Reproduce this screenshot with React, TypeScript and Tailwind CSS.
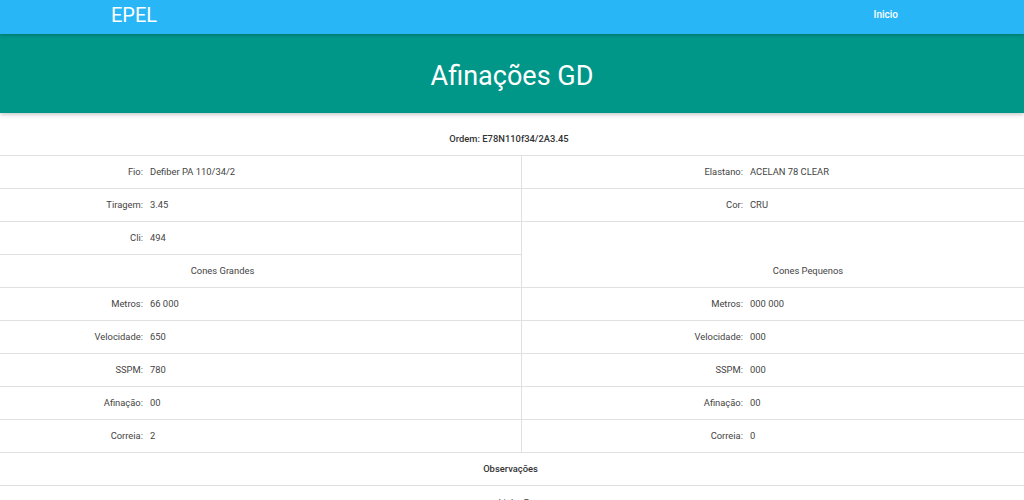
import React from "react";

const font = { fontFamily: "Roboto, 'Noto Sans', sans-serif" };

function Pair({ label, value, labelW }: { label: string; value: string; labelW: string }) {
  return (
    <div className="flex h-[32px] items-center text-[9.4px] text-[#444]">
      <div className={`${labelW} shrink-0 text-right`}>{label}:</div>
      <div className="pl-[7px]">{value}</div>
    </div>
  );
}

function Row({ l, r }: { l: [string, string]; r: [string, string] }) {
  return (
    <div className="flex border-b border-[#e0e0e0]">
      <div className="w-[521px] shrink-0">
        <Pair label={l[0]} value={l[1]} labelW="w-[143px]" />
      </div>
      <div className="flex-1 border-l border-[#e0e0e0]">
        <Pair label={r[0]} value={r[1]} labelW="w-[221px]" />
      </div>
    </div>
  );
}

export default function App() {
  return (
    <div className="w-[1024px] h-[500px] overflow-hidden bg-white" style={font}>
      <nav className="relative z-20 flex h-[34px] items-center bg-[#29b6f6] shadow-[0_1px_3px_rgba(0,0,0,0.25)]">
        <div className="pl-[111px] text-[20px] font-normal leading-none text-white pb-[4px]">EPEL</div>
        <div className="ml-auto mr-[126px] pb-[6px] text-[10px] font-medium text-white">Inicio</div>
      </nav>
      <header className="relative z-10 flex h-[79px] items-center justify-center bg-[#009688] pt-[5px] shadow-[0_2px_4px_rgba(0,0,0,0.2)]">
        <h1 className="text-[27px] font-normal text-white">Afinações GD</h1>
      </header>
      <div className="flex h-[43px] items-center justify-center border-b border-[#e0e0e0] pt-[11px] pr-[6px] text-[9.4px] font-medium text-[#333]">
        Ordem: E78N110f34/2A3.45
      </div>
      <Row l={["Fio", "Defiber PA 110/34/2"]} r={["Elastano", "ACELAN 78 CLEAR"]} />
      <Row l={["Tiragem", "3.45"]} r={["Cor", "CRU"]} />
      <div className="flex border-b border-[#e0e0e0]">
        <div className="w-[521px] shrink-0">
          <div className="border-b border-[#e0e0e0]">
            <Pair label="Cli" value="494" labelW="w-[143px]" />
          </div>
          <div className="flex h-[32px] items-center justify-center pr-[76px] text-[9.4px] text-[#444]">Cones Grandes</div>
        </div>
        <div className="flex flex-1 items-end justify-center border-l border-[#e0e0e0] pl-[70px]">
          <div className="flex h-[32px] items-center text-[9.4px] text-[#444]">Cones Pequenos</div>
        </div>
      </div>
      <Row l={["Metros", "66 000"]} r={["Metros", "000 000"]} />
      <Row l={["Velocidade", "650"]} r={["Velocidade", "000"]} />
      <Row l={["SSPM", "780"]} r={["SSPM", "000"]} />
      <Row l={["Afinação", "00"]} r={["Afinação", "00"]} />
      <Row l={["Correia", "2"]} r={["Correia", "0"]} />
      <div className="flex h-[33px] items-center justify-center border-b border-[#e0e0e0] pr-[3px] text-[9.4px] font-medium text-[#333]">
        Observações
      </div>
      <div className="flex h-[33px] items-center justify-center pl-[4px] pt-[2px] text-[9.4px] text-[#444]">Linha B</div>
    </div>
  );
}
